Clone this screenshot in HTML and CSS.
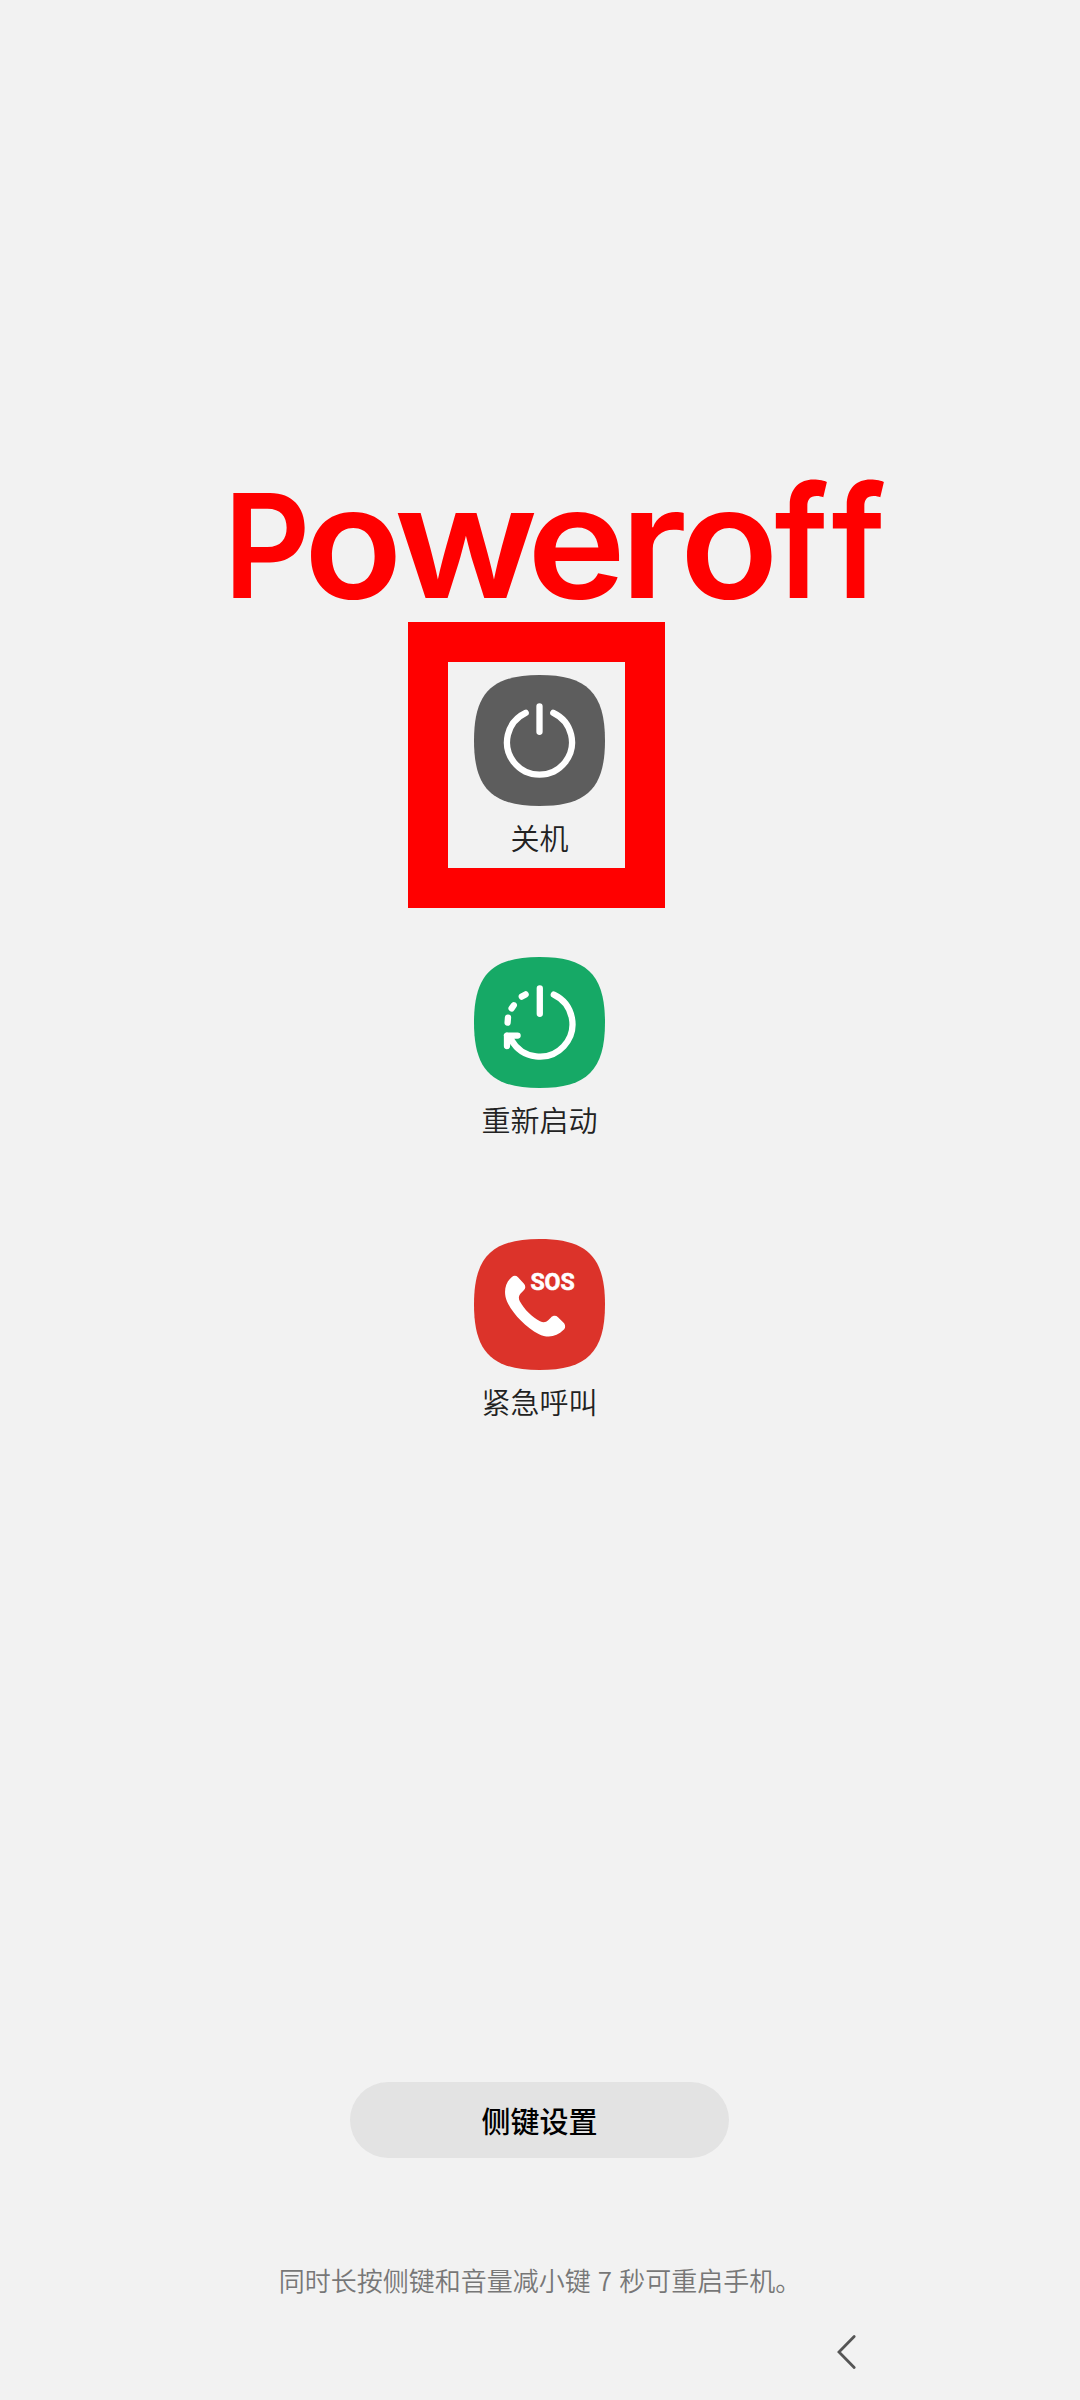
FILE: index.html
```html
<!DOCTYPE html>
<html lang="zh-CN">
<head>
<meta charset="utf-8">
<title>关机</title>
<link rel="stylesheet" href="styles.css">
</head>
<body>
<main class="screen">
  <svg class="headline" width="680" height="150" viewBox="0 0 680 150">
    <text y="128"><tspan class="headline-cap" x="13.5" textLength="87" lengthAdjust="spacingAndGlyphs">P</tspan><tspan x="94" textLength="98.5" lengthAdjust="spacingAndGlyphs">o</tspan><tspan x="184" textLength="144" lengthAdjust="spacingAndGlyphs">w</tspan><tspan x="317" textLength="99" lengthAdjust="spacingAndGlyphs">e</tspan><tspan x="410" textLength="67" lengthAdjust="spacingAndGlyphs">r</tspan><tspan x="470" textLength="98.5" lengthAdjust="spacingAndGlyphs">o</tspan><tspan x="564.5" textLength="54" lengthAdjust="spacingAndGlyphs">f</tspan><tspan x="621.5" textLength="54" lengthAdjust="spacingAndGlyphs">f</tspan></text>
  </svg>

  <section class="actions">
    <div class="action action-off">
      <svg class="icon" viewBox="0 0 131 131">
        <path class="tile tile-gray" d="M0 65.5C0 18 18 0 65.5 0S131 18 131 65.5 113 131 65.5 131 0 113 0 65.5Z"/>
        <path class="line" d="M51.7 37.8A32.5 32.5 0 1 0 79.3 37.8M65.5 31.3V56.8"/>
      </svg>
      <span class="label">关机</span>
      <div class="frame"></div>
    </div>
    <div class="action">
      <svg class="icon" viewBox="0 0 131 131">
        <path class="tile tile-green" d="M0 65.5C0 18 18 0 65.5 0S131 18 131 65.5 113 131 65.5 131 0 113 0 65.5Z"/>
        <path class="line" d="M79.8 37.6A32.6 32.6 0 1 1 37.4 83L33 78.6M33 89V78.6H43.6M65.8 31.3V56.8M47.8 39.6L51.6 37.4M37.6 51.4L39.8 48.2M33.6 65.6L34 60.6"/>
      </svg>
      <span class="label">重新启动</span>
    </div>
    <div class="action">
      <svg class="icon" viewBox="0 0 131 131">
        <path class="tile tile-red" d="M0 65.5C0 18 18 0 65.5 0S131 18 131 65.5 113 131 65.5 131 0 113 0 65.5Z"/>
        <path class="phone" d="M37.6 38.2C39.8 36.4 42 36.4 44 38.2L50 44.8C51.8 46.8 51.6 49.4 49.8 51.2L46.4 54.8C44.6 57 44.4 59.6 45.8 62.2C50.4 70.5 58 78.2 66 82.2C69.4 83.8 72 83.4 74.2 81.2L77 78.4C79.2 76.4 82 76.4 84 78.2L89.6 83.8C91.6 86 91.6 88.8 89.6 90.8C82.5 98 73.8 99.6 64.6 95C52 88.6 38.4 74.6 33 62.4C29.2 53.2 31 43.8 37.6 38.2Z"/>
        <text class="sos" x="56.4" y="51.2" textLength="44.4" lengthAdjust="spacingAndGlyphs">SOS</text>
      </svg>
      <span class="label">紧急呼叫</span>
    </div>
  </section>

  <button class="settings">侧键设置</button>
  <p class="hint">同时长按侧键和音量减小键 7 秒可重启手机。</p>
  <nav class="nav">
    <svg width="24" height="40" viewBox="0 0 24 40"><path class="back" d="M19.2 4.4L4 20L19.2 35.4"/></svg>
  </nav>
</main>
</body>
</html>
```
FILE: styles.css
```css
body {
  margin: 0;
  background: #f2f2f2;
  font-family: "Noto Sans CJK SC", "Noto Sans", sans-serif;
}
.screen {
  box-sizing: border-box;
  height: 2400px;
  padding-top: 470px;
  display: flex;
  flex-direction: column;
  align-items: center;
}
.headline {
  display: block;
  flex: none;
  align-self: flex-start;
  margin-left: 210px;
  overflow: visible;
  fill: #f00;
  font-family: Inter, sans-serif;
  font-size: 155px;
  font-weight: 640;
}
.headline-cap { font-size: 144px; }
.actions {
  margin-top: 55px;
  display: flex;
  flex-direction: column;
  gap: 90px;
}
.action {
  position: relative;
  height: 192px;
  display: flex;
  flex-direction: column;
  align-items: center;
  margin-right: 1px;
}
.icon {
  display: block;
  width: 131px;
  height: 131px;
}
.tile-gray { fill: #5d5d5d; }
.tile-green { fill: #16a966; }
.tile-red { fill: #dc332a; }
.line {
  fill: none;
  stroke: #fff;
  stroke-width: 6.3;
  stroke-linecap: round;
  stroke-linejoin: round;
}
.phone { fill: #fff; }
.sos {
  fill: #fff;
  stroke: #fff;
  stroke-width: 0.6;
  font: 700 24.5px Roboto, sans-serif;
}
.label {
  margin-top: 10px;
  font-size: 29px;
  line-height: 42px;
  font-weight: 350;
  color: #222;
  white-space: nowrap;
}
.frame {
  position: absolute;
  left: -66px;
  top: -53px;
  box-sizing: border-box;
  width: 257px;
  height: 286px;
  border: 40px solid #f00;
}
.settings {
  margin: 651px 1px 0 0;
  padding: 0;
  width: 379px;
  height: 76px;
  border: 0;
  border-radius: 38px;
  background: #e3e3e3;
  color: #000;
  font: 500 29px "Noto Sans CJK SC", sans-serif;
}
.hint {
  margin: 104px 0 0 0;
  font-size: 26px;
  line-height: 36px;
  font-weight: 350;
  word-spacing: 1.3px;
  color: #777;
  white-space: nowrap;
}
.nav {
  align-self: flex-start;
  margin: 34px 0 0 835px;
  height: 40px;
}
.nav svg { display: block; }
.back {
  fill: none;
  stroke: #555;
  stroke-width: 2.8;
  stroke-linecap: round;
}
```
